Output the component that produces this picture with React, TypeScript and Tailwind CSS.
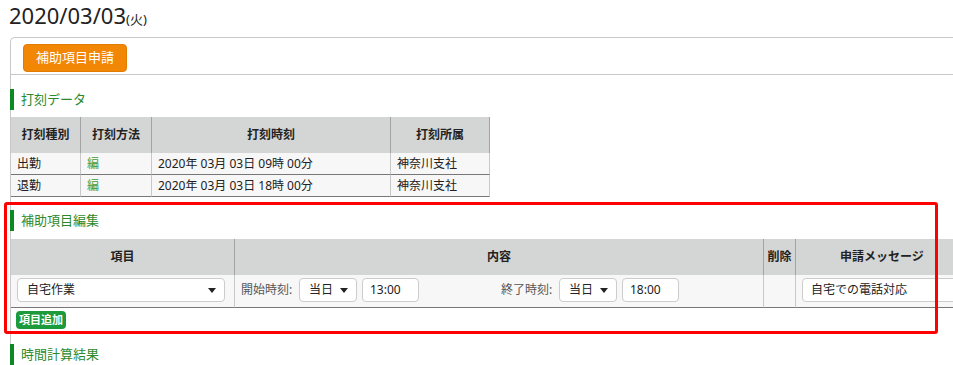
import type { ReactNode } from "react";

const headCell =
  "flex h-[36px] items-center justify-center border-r border-[#a3a3a3] bg-[#d4d6d6] font-bold";
const stampCell =
  "flex h-[22px] items-center border-b border-r border-b-[#777] border-r-[#c8c8c8] bg-[#f7f7f7] pl-[6px]";

function SectionHeading({ children, className = "" }: { children: ReactNode; className?: string }) {
  return (
    <div
      className={`-ml-px flex h-[21px] items-center border-l-4 border-[#0b8a22] pl-[7px] text-[13px] text-[#2c8a2c] ${className}`}
    >
      {children}
    </div>
  );
}

function Caret() {
  return <span className="ml-auto h-0 w-0 border-x-[4px] border-t-[5px] border-x-transparent border-t-[#222]" />;
}

function FakeSelect({ value, className = "" }: { value: string; className?: string }) {
  return (
    <div
      className={`flex h-[24px] items-center rounded-[4px] border border-[#ccc] bg-white pl-[9px] pr-[8px] ${className}`}
    >
      <span>{value}</span>
      <Caret />
    </div>
  );
}

function FakeInput({ value, className = "" }: { value: string; className?: string }) {
  return (
    <div className={`flex h-[24px] items-center rounded-[4px] border border-[#ccc] bg-white pl-[7px] ${className}`}>
      {value}
    </div>
  );
}

const stamps = [
  { kind: "出勤", time: "2020年 03月 03日 09時 00分" },
  { kind: "退勤", time: "2020年 03月 03日 18時 00分" },
];

export default function App() {
  return (
    <div className="relative h-[365px] w-[953px] overflow-hidden bg-white font-['Noto_Sans','Noto_Sans_CJK_JP',sans-serif] text-[12px] text-[#222]">
      <div className="h-[37px] pl-[9px] leading-[30px]">
        <span className="text-[22px]">2020/03/03</span>
        <span className="text-[13px] leading-none">(火)</span>
      </div>

      <div className="ml-[10px] w-[1000px] rounded-tl-[5px] border-l border-t border-[#c8c8c8]">
        <div className="border-b border-[#c8c8c8] pb-[2px] pl-[12px] pt-[6px]">
          <button
            type="button"
            className="h-[28px] w-[104px] rounded-[4px] border border-[#e27c00] bg-[#f28605] text-[13px] text-white"
          >
            補助項目申請
          </button>
        </div>

        <SectionHeading className="mt-[14px]">打刻データ</SectionHeading>
        <div className="mt-[7px] grid w-[479px] grid-cols-[70px_71px_239px_99px]">
          <div className={headCell}>打刻種別</div>
          <div className={headCell}>打刻方法</div>
          <div className={headCell}>打刻時刻</div>
          <div className={headCell}>打刻所属</div>
          {stamps.map((s) => (
            <div key={s.kind} className="contents">
              <div className={stampCell}>
                <span>{s.kind}</span>
              </div>
              <div className={stampCell}>
                <span className="text-[#3c9c3c]">編</span>
              </div>
              <div className={stampCell}>{s.time}</div>
              <div className={`${stampCell} border-r-[#aaa]`}>神奈川支社</div>
            </div>
          ))}
        </div>

        <SectionHeading className="mt-[13px]">補助項目編集</SectionHeading>
        <div className="mt-[8px] grid w-[957px] grid-cols-[224px_529px_32px_172px]">
          <div className={headCell}>項目</div>
          <div className={headCell}>内容</div>
          <div className={headCell}>削除</div>
          <div className={`${headCell} border-r-0`}>申請メッセージ</div>

          <div className="h-[33px] border-b border-r border-b-[#777] border-r-[#c8c8c8] bg-[#f7f7f7] pl-[6px] pt-[3px]">
            <FakeSelect value="自宅作業" className="w-[208px]" />
          </div>
          <div className="flex h-[33px] items-start border-b border-r border-b-[#777] border-r-[#c8c8c8] bg-[#f7f7f7] pl-[6px] pt-[3px]">
            <span className="w-[58px] leading-[24px] text-[#555]">開始時刻:</span>
            <FakeSelect value="当日" className="w-[58px]" />
            <FakeInput value="13:00" className="ml-[5px] w-[57px]" />
            <span className="ml-[82px] w-[58px] leading-[24px] text-[#555]">終了時刻:</span>
            <FakeSelect value="当日" className="w-[58px]" />
            <FakeInput value="18:00" className="ml-[5px] w-[57px]" />
          </div>
          <div className="h-[33px] border-b border-r border-b-[#777] border-r-[#c8c8c8] bg-[#f7f7f7]" />
          <div className="h-[33px] border-b border-[#777] bg-[#f7f7f7] pl-[6px] pt-[3px]">
            <FakeInput value="自宅での電話対応" className="w-[300px] pl-[8px]" />
          </div>
        </div>
        <button
          type="button"
          className="ml-[5px] mt-[3px] flex h-[18px] w-[50px] items-center justify-center rounded-[4px] bg-[#1c9a3c] text-[11px] font-bold text-white"
        >
          項目追加
        </button>

        <SectionHeading className="mt-[15px]">時間計算結果</SectionHeading>
        <div className="h-[40px]" />
      </div>

      {/* annotation frame over the edit section */}
      <div className="pointer-events-none absolute left-[4px] top-[202px] h-[132px] w-[934px] rounded-[3px] border-[3px] border-[#f00]" />
    </div>
  );
}
